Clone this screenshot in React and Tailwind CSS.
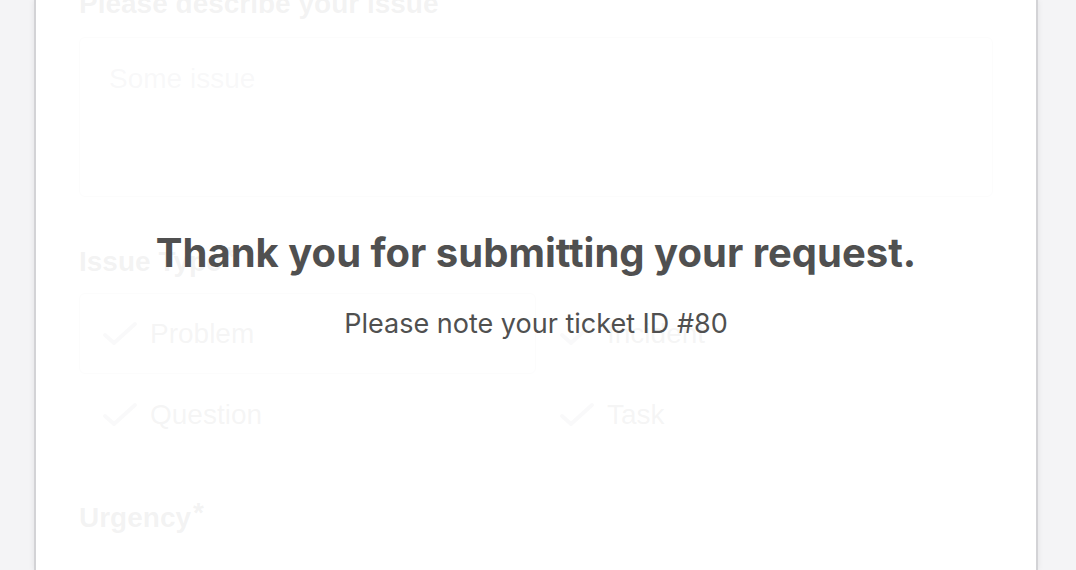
import React from "react";

const options = [
  { label: "Problem", selected: true },
  { label: "Incident", selected: false },
  { label: "Question", selected: false },
  { label: "Task", selected: false },
];

function Check() {
  return (
    <svg width="36" height="26" viewBox="0 0 36 26" fill="none" className="shrink-0">
      <path d="M3 14 L12 22 L33 3" stroke="#9a9aa0" strokeWidth="4" strokeLinecap="round" strokeLinejoin="round" />
    </svg>
  );
}

export default function App() {
  return (
    <div className="h-[570px] overflow-hidden bg-[#f4f4f6] pl-[34px] pr-[38px]">
      <div className="relative flow-root h-full bg-white border-x-2 border-[#d3d3d6] shadow-[0_0_6px_rgba(0,0,0,0.08)] px-[43px] font-['Liberation_Sans',Arial,sans-serif]">
        {/* the form behind the confirmation */}
        <div className="-mt-[12px]">
          <label className="block text-[28px] leading-[32px] font-bold text-[#333]">
            Please describe your issue<span className="relative -top-[5px] ml-[2px]">*</span>
          </label>
          <div className="mt-[17px] h-[160px] rounded-md border border-[#c4c4c8] px-[29px] pt-[25px] text-[28px] leading-[32px] text-[#8a8a90]">
            Some issue
          </div>

          <label className="block mt-[49px] text-[28px] leading-[32px] font-bold text-[#333]">
            Issue Type<span className="relative -top-[5px] ml-[2px]">*</span>
          </label>
          <div className="mt-[15px] grid grid-cols-2">
            {options.map((o) => (
              <div
                key={o.label}
                className={`flex h-[81px] items-center gap-[12px] rounded-md px-[22px] text-[28px] text-[#555] ${o.selected ? "border border-[#c4c4c8]" : "border border-transparent"}`}
              >
                <Check />
                <span>{o.label}</span>
              </div>
            ))}
          </div>

          <label className="block mt-[47px] text-[28px] leading-[32px] font-bold text-[#333]">
            Urgency<span className="relative -top-[5px] ml-[2px]">*</span>
          </label>
        </div>

        {/* confirmation overlay */}
        <div className="absolute inset-0 bg-white/[0.94] flex flex-col items-center pt-[229px] font-['Inter',sans-serif]">
          <h2 className="text-[40px] leading-[48px] font-bold text-[#505050]">
            Thank you for submitting your request.
          </h2>
          <p className="mt-[31px] text-[27px] leading-[32px] text-[#505050]">
            Please note your ticket ID #80
          </p>
        </div>
      </div>
    </div>
  );
}
